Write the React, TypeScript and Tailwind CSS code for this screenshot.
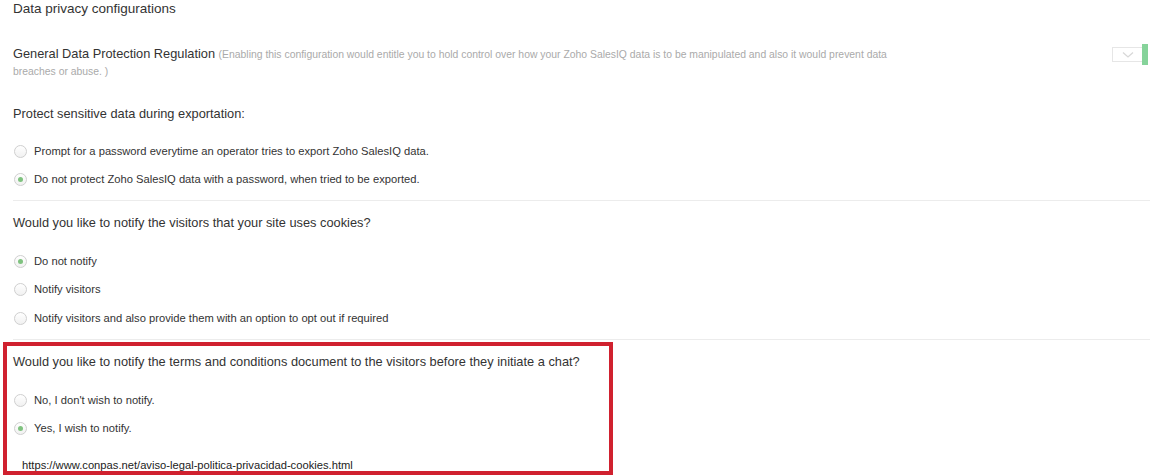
import React from "react";

function Radio({ label, checked = false }: { label: string; checked?: boolean }) {
  return (
    <div className="flex h-[28px] items-center gap-[7px] pl-px">
      <span className="flex h-[13px] w-[13px] items-center justify-center rounded-full border border-[#cfcfcf] bg-gradient-to-b from-white to-[#f1f1f1]">
        {checked && <span className="h-[5px] w-[5px] rounded-full bg-[#7fc27f]" />}
      </span>
      <span className="text-[11.2px] text-[#333]">{label}</span>
    </div>
  );
}

export default function App() {
  return (
    <div className="h-[475px] overflow-hidden bg-white pl-[13px] pr-[17px] font-['Liberation_Sans',Arial,sans-serif] text-[#333]">
      {/* Page title */}
      <div className="h-[18px] text-[13.5px] leading-[18px]">Data privacy configurations</div>

      {/* GDPR row with toggle */}
      <div className="mt-[28px] flex items-start justify-between">
        <p className="w-[895px] text-[12.8px] leading-[16px]">
          General Data Protection Regulation{" "}
          <span className="text-[10.4px] text-[#aaa]">
            (Enabling this configuration would entitle you to hold control over how your Zoho SalesIQ data is to be manipulated and also it would prevent data breaches or abuse. )
          </span>
        </p>
        <div className="mr-[2px] mt-[-2px] flex items-center">
          <div className="flex h-[15px] w-[30px] items-center justify-center border border-r-0 border-[#e6e6e6]">
            <svg width="12" height="8" viewBox="0 0 12 8" fill="none">
              <path d="M1 1.5l5 4.5 5-4.5" stroke="#d8d8d8" strokeWidth="1.3" />
            </svg>
          </div>
          <div className="h-[21px] w-[6px] bg-[#86d39a]" />
        </div>
      </div>

      {/* Export protection */}
      <div className="mt-[25px] h-[18px] text-[12.8px] leading-[18px]">Protect sensitive data during exportation:</div>
      <div className="mt-[14px]">
        <Radio label="Prompt for a password everytime an operator tries to export Zoho SalesIQ data." />
        <Radio label="Do not protect Zoho SalesIQ data with a password, when tried to be exported." checked />
      </div>
      <div className="mt-[7px] border-t border-[#ececec]" />

      {/* Cookies */}
      <div className="mt-[13px] h-[18px] text-[12.8px] leading-[18px]">Would you like to notify the visitors that your site uses cookies?</div>
      <div className="mt-[15px]">
        <Radio label="Do not notify" checked />
        <Radio label="Notify visitors" />
        <div className="mt-px">
          <Radio label="Notify visitors and also provide them with an option to opt out if required" />
        </div>
      </div>
      <div className="mt-[7px] border-t border-[#ececec]" />

      {/* Terms and conditions, highlighted */}
      <div className="ml-[-10px] mt-[2px] h-[133px] w-[610px] overflow-hidden border-4 border-[#d0212f] pl-[6px] pt-[7px]">
        <div className="h-[18px] whitespace-nowrap text-[12.8px] leading-[18px]">
          Would you like to notify the terms and conditions document to the visitors before they initiate a chat?
        </div>
        <div className="mt-[15px]">
          <Radio label="No, I don't wish to notify." />
          <Radio label="Yes, I wish to notify." checked />
        </div>
        <div className="mt-[15px] pl-[9px] text-[11.2px] leading-[16px] text-[#222]">
          https://www.conpas.net/aviso-legal-politica-privacidad-cookies.html
        </div>
      </div>
    </div>
  );
}
